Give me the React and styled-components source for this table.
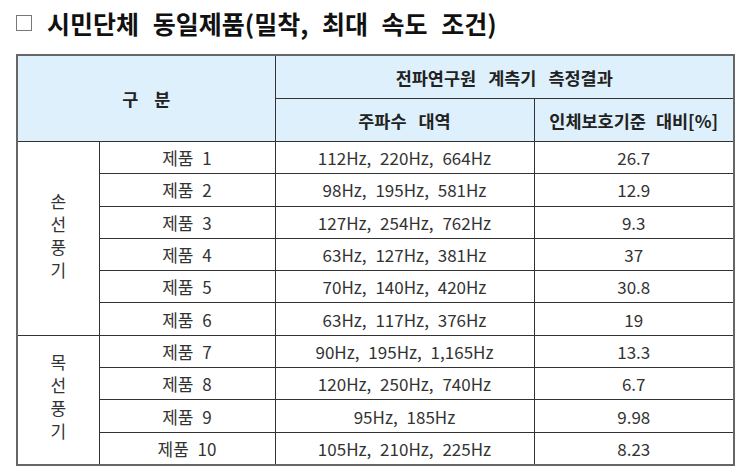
import React from 'react'
import styled, { createGlobalStyle } from 'styled-components'

const GlobalStyle = createGlobalStyle`
  body {
    margin: 0;
    background: #fff;
    font-family: 'Noto Sans CJK KR', 'Noto Sans', sans-serif;
    color: #222;
  }
`

const Page = styled.div`
  width: 745px;
  height: 476px;
  padding: 7px 0 0 16px;
  box-sizing: border-box;
`

const Title = styled.h1`
  display: flex;
  align-items: center;
  gap: 15px;
  margin: 0;
  height: 31px;
  font-size: 25px;
  font-weight: 700;
  color: #111;
  word-spacing: 8px;
`

const Box = styled.span`
  display: inline-block;
  width: 16px;
  height: 16px;
  border: 1.5px solid #777;
  box-sizing: border-box;
`

const Table = styled.table`
  margin-top: 16px;
  width: 717px;
  border-collapse: collapse;
  table-layout: fixed;
  border: 2px solid #666;
  font-size: 17px;
  color: #333;
`

const Head = styled.th`
  background: #def0fb;
  border: 1px solid #333;
  font-size: 17.5px;
  font-weight: 700;
  color: #222;
  height: ${p => p.$h}px;
  padding: 0;
  text-align: center;
  vertical-align: middle;
  word-spacing: ${p => p.$ws || 8}px;
`

const Cell = styled.td`
  border: 1px solid #333;
  height: 31.3px;
  padding: 0;
  text-align: center;
  vertical-align: middle;
  word-spacing: 5px;
`

const Group = styled.td`
  border: 1px solid #333;
  padding: 0;
  text-align: center;
  vertical-align: middle;
`

const Vertical = styled.div`
  display: inline-block;
  writing-mode: vertical-lr;
  text-orientation: upright;
  letter-spacing: 6px;
  line-height: 1;
  font-size: 17px;
  color: #333;
  padding-top: 6px;
`

const hand = [
  ['112Hz, 220Hz, 664Hz', '26.7'],
  ['98Hz, 195Hz, 581Hz', '12.9'],
  ['127Hz, 254Hz, 762Hz', '9.3'],
  ['63Hz, 127Hz, 381Hz', '37'],
  ['70Hz, 140Hz, 420Hz', '30.8'],
  ['63Hz, 117Hz, 376Hz', '19'],
]

const neck = [
  ['90Hz, 195Hz, 1,165Hz', '13.3'],
  ['120Hz, 250Hz, 740Hz', '6.7'],
  ['95Hz, 185Hz', '9.98'],
  ['105Hz, 210Hz, 225Hz', '8.23'],
]

const App = () => {
  return (
    <>
      <GlobalStyle />
      <Page>
        <Title>
          <Box />
          <span>시민단체 동일제품(밀착, 최대 속도 조건)</span>
        </Title>
        <Table>
          <colgroup>
            <col style={{ width: 82 }} />
            <col style={{ width: 176 }} />
            <col style={{ width: 259 }} />
            <col style={{ width: 200 }} />
          </colgroup>
          <thead>
            <tr>
              <Head colSpan={2} rowSpan={2} $h={42} $ws={12}>
                구 분
              </Head>
              <Head colSpan={2} $h={42}>
                전파연구원 계측기 측정결과
              </Head>
            </tr>
            <tr>
              <Head $h={42}>주파수 대역</Head>
              <Head $h={42} $ws={6}>인체보호기준 대비[%]</Head>
            </tr>
          </thead>
          <tbody>
            {hand.map((r, i) => (
              <tr key={'h' + i}>
                {i === 0 && (
                  <Group rowSpan={6}>
                    <Vertical>손선풍기</Vertical>
                  </Group>
                )}
                <Cell>제품 {i + 1}</Cell>
                <Cell>{r[0]}</Cell>
                <Cell>{r[1]}</Cell>
              </tr>
            ))}
            {neck.map((r, i) => (
              <tr key={'n' + i}>
                {i === 0 && (
                  <Group rowSpan={4}>
                    <Vertical>목선풍기</Vertical>
                  </Group>
                )}
                <Cell>제품 {i + 7}</Cell>
                <Cell>{r[0]}</Cell>
                <Cell>{r[1]}</Cell>
              </tr>
            ))}
          </tbody>
        </Table>
      </Page>
    </>
  )
}

export default App
